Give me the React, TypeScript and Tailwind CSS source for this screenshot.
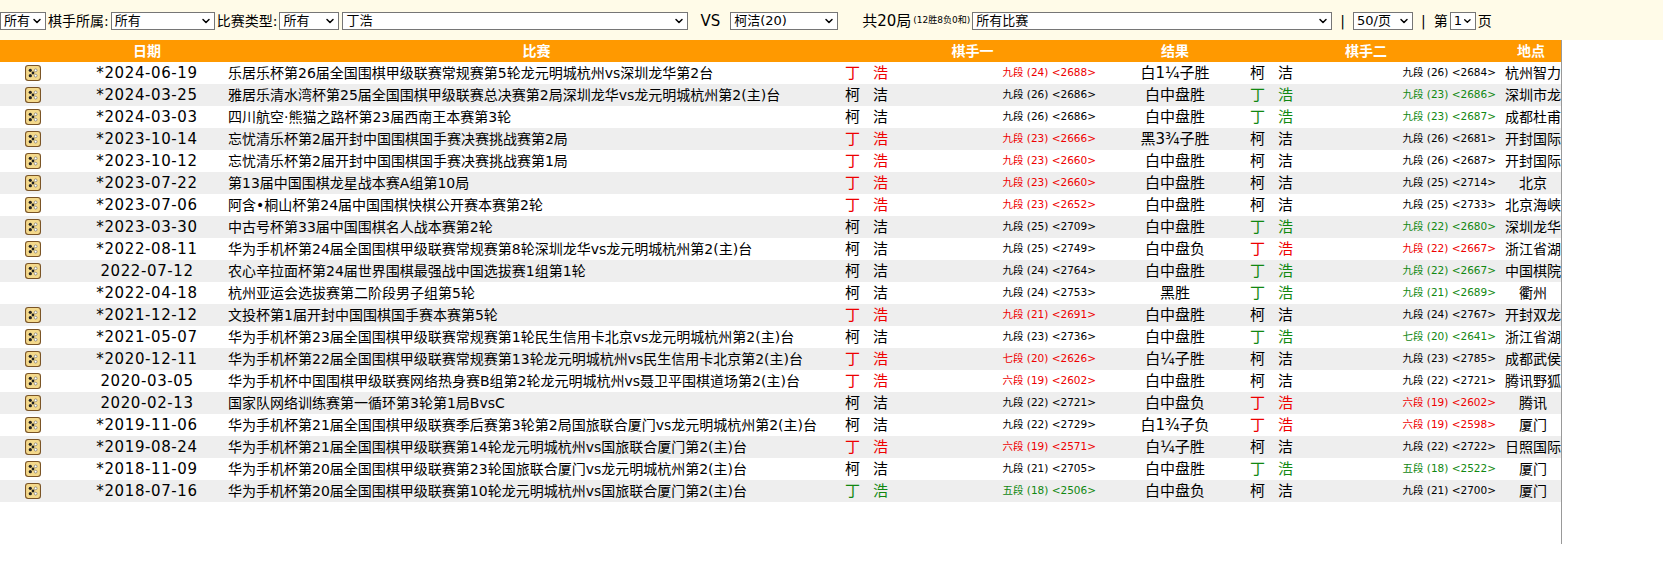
import { ChevronDown } from "lucide-react";

type Row = {
  date: string;
  match: string;
  dingFirst: boolean;
  dingWin: boolean;
  r1: string;
  result: string;
  r2: string;
  place: string;
  icon?: boolean;
};

const rows: Row[] = [
  { date: "*2024-06-19", match: "乐居乐杯第26届全国围棋甲级联赛常规赛第5轮龙元明城杭州vs深圳龙华第2台", dingFirst: true, dingWin: true, r1: "九段 (24) <2688>", result: "白1¼子胜", r2: "九段 (26) <2684>", place: "杭州智力" },
  { date: "*2024-03-25", match: "雅居乐清水湾杯第25届全国围棋甲级联赛总决赛第2局深圳龙华vs龙元明城杭州第2(主)台", dingFirst: false, dingWin: false, r1: "九段 (26) <2686>", result: "白中盘胜", r2: "九段 (23) <2686>", place: "深圳市龙" },
  { date: "*2024-03-03", match: "四川航空·熊猫之路杯第23届西南王本赛第3轮", dingFirst: false, dingWin: false, r1: "九段 (26) <2686>", result: "白中盘胜", r2: "九段 (23) <2687>", place: "成都杜甫" },
  { date: "*2023-10-14", match: "忘忧清乐杯第2届开封中国围棋国手赛决赛挑战赛第2局", dingFirst: true, dingWin: true, r1: "九段 (23) <2666>", result: "黑3¾子胜", r2: "九段 (26) <2681>", place: "开封国际" },
  { date: "*2023-10-12", match: "忘忧清乐杯第2届开封中国围棋国手赛决赛挑战赛第1局", dingFirst: true, dingWin: true, r1: "九段 (23) <2660>", result: "白中盘胜", r2: "九段 (26) <2687>", place: "开封国际" },
  { date: "*2023-07-22", match: "第13届中国围棋龙星战本赛A组第10局", dingFirst: true, dingWin: true, r1: "九段 (23) <2660>", result: "白中盘胜", r2: "九段 (25) <2714>", place: "北京" },
  { date: "*2023-07-06", match: "阿含•桐山杯第24届中国围棋快棋公开赛本赛第2轮", dingFirst: true, dingWin: true, r1: "九段 (23) <2652>", result: "白中盘胜", r2: "九段 (25) <2733>", place: "北京海峡" },
  { date: "*2023-03-30", match: "中古号杯第33届中国围棋名人战本赛第2轮", dingFirst: false, dingWin: false, r1: "九段 (25) <2709>", result: "白中盘胜", r2: "九段 (22) <2680>", place: "深圳龙华" },
  { date: "*2022-08-11", match: "华为手机杯第24届全国围棋甲级联赛常规赛第8轮深圳龙华vs龙元明城杭州第2(主)台", dingFirst: false, dingWin: true, r1: "九段 (25) <2749>", result: "白中盘负", r2: "九段 (22) <2667>", place: "浙江省湖" },
  { date: "2022-07-12", match: "农心辛拉面杯第24届世界围棋最强战中国选拔赛1组第1轮", dingFirst: false, dingWin: false, r1: "九段 (24) <2764>", result: "白中盘胜", r2: "九段 (22) <2667>", place: "中国棋院" },
  { date: "*2022-04-18", match: "杭州亚运会选拔赛第二阶段男子组第5轮", dingFirst: false, dingWin: false, r1: "九段 (24) <2753>", result: "黑胜", r2: "九段 (21) <2689>", place: "衢州", icon: false },
  { date: "*2021-12-12", match: "文投杯第1届开封中国围棋国手赛本赛第5轮", dingFirst: true, dingWin: true, r1: "九段 (21) <2691>", result: "白中盘胜", r2: "九段 (24) <2767>", place: "开封双龙" },
  { date: "*2021-05-07", match: "华为手机杯第23届全国围棋甲级联赛常规赛第1轮民生信用卡北京vs龙元明城杭州第2(主)台", dingFirst: false, dingWin: false, r1: "九段 (23) <2736>", result: "白中盘胜", r2: "七段 (20) <2641>", place: "浙江省湖" },
  { date: "*2020-12-11", match: "华为手机杯第22届全国围棋甲级联赛常规赛第13轮龙元明城杭州vs民生信用卡北京第2(主)台", dingFirst: true, dingWin: true, r1: "七段 (20) <2626>", result: "白¼子胜", r2: "九段 (23) <2785>", place: "成都武侯" },
  { date: "2020-03-05", match: "华为手机杯中国围棋甲级联赛网络热身赛B组第2轮龙元明城杭州vs聂卫平围棋道场第2(主)台", dingFirst: true, dingWin: true, r1: "六段 (19) <2602>", result: "白中盘胜", r2: "九段 (22) <2721>", place: "腾讯野狐" },
  { date: "2020-02-13", match: "国家队网络训练赛第一循环第3轮第1局BvsC", dingFirst: false, dingWin: true, r1: "九段 (22) <2721>", result: "白中盘负", r2: "六段 (19) <2602>", place: "腾讯" },
  { date: "*2019-11-06", match: "华为手机杯第21届全国围棋甲级联赛季后赛第3轮第2局国旅联合厦门vs龙元明城杭州第2(主)台", dingFirst: false, dingWin: true, r1: "九段 (22) <2729>", result: "白1¾子负", r2: "六段 (19) <2598>", place: "厦门" },
  { date: "*2019-08-24", match: "华为手机杯第21届全国围棋甲级联赛第14轮龙元明城杭州vs国旅联合厦门第2(主)台", dingFirst: true, dingWin: true, r1: "六段 (19) <2571>", result: "白¼子胜", r2: "九段 (22) <2722>", place: "日照国际" },
  { date: "*2018-11-09", match: "华为手机杯第20届全国围棋甲级联赛第23轮国旅联合厦门vs龙元明城杭州第2(主)台", dingFirst: false, dingWin: false, r1: "九段 (21) <2705>", result: "白中盘胜", r2: "五段 (18) <2522>", place: "厦门" },
  { date: "*2018-07-16", match: "华为手机杯第20届全国围棋甲级联赛第10轮龙元明城杭州vs国旅联合厦门第2(主)台", dingFirst: true, dingWin: false, r1: "五段 (18) <2506>", result: "白中盘负", r2: "九段 (21) <2700>", place: "厦门" },
];

const font = { fontFamily: '"DejaVu Sans", "Noto Sans CJK SC", sans-serif' };

function Select({ w, label }: { w: string; label: string }) {
  return (
    <span className={`inline-flex h-[18px] items-center justify-between border border-[#767676] bg-white pl-[3px] pr-[2px] text-[13px] text-black ${w}`}>
      <span>{label}</span>
      <ChevronDown size={12} strokeWidth={3} />
    </span>
  );
}

function BoardIcon() {
  return (
    <svg width="16" height="16" viewBox="0 0 15 15">
      <rect x="0.5" y="0.5" width="14" height="14" rx="2.5" fill="#f4d98c" stroke="#7a5426" />
      <circle cx="5" cy="5" r="1.5" fill="#222" />
      <circle cx="10" cy="5" r="1.3" fill="#fff" stroke="#555" strokeWidth="0.5" />
      <circle cx="7.5" cy="7.5" r="1.3" fill="#222" />
      <circle cx="5" cy="10" r="1.5" fill="#222" />
      <circle cx="10" cy="10" r="1.3" fill="#fff" stroke="#555" strokeWidth="0.5" />
    </svg>
  );
}

function Player({ ding, win, rank }: { ding: boolean; win: boolean; rank: string }) {
  const color = ding ? (win ? "text-[#ee0000]" : "text-[#118811]") : "text-black";
  return (
    <div className={`flex items-center ${color}`}>
      <span className="w-[28px] text-[15px]">{ding ? "丁" : "柯"}</span>
      <span className="text-[15px]">{ding ? "浩" : "洁"}</span>
      <span className="ml-auto pr-[4px] text-[10.5px]">{rank}</span>
    </div>
  );
}

export default function App() {
  return (
    <div className="h-[562px] w-[1663px] bg-white text-black" style={font}>
      <div className="flex h-[40px] items-center gap-[2px] bg-[#fffbe8] pt-[2px] text-[14px] whitespace-nowrap">
        <Select w="w-[46px]" label="所有" />
        <span>棋手所属:</span>
        <Select w="w-[104px]" label="所有" />
        <span>比赛类型:</span>
        <Select w="w-[60px]" label="所有" />
        <Select w="w-[346px] ml-[1px]" label="丁浩" />
        <span className="ml-[10px] mr-[8px] text-[15px]">VS</span>
        <Select w="w-[108px]" label="柯洁(20)" />
        <span className="ml-[22px] text-[15px]">共20局</span>
        <span className="text-[9px]">(12胜8负0和)</span>
        <Select w="w-[360px]" label="所有比赛" />
        <span className="mx-[6px]">|</span>
        <Select w="w-[60px]" label="50/页" />
        <span className="mx-[6px]">|</span>
        <span>第</span>
        <Select w="w-[26px]" label="1" />
        <span>页</span>
      </div>
      <div className="w-[1562px] border-r border-[#999]">
        <div className="grid h-[22px] grid-cols-[66px_162px_617px_255px_150px_250px_62px] items-center bg-[#ff9900] text-[14px] font-bold text-white">
          <span />
          <span className="text-center">日期</span>
          <span className="text-center">比赛</span>
          <span className="text-center">棋手一</span>
          <span className="text-center">结果</span>
          <span className="pl-[95px]">棋手二</span>
          <span className="text-center">地点</span>
        </div>
        {rows.map((r, i) => (
          <div
            key={i}
            className={`grid h-[22px] grid-cols-[66px_162px_617px_255px_150px_250px_62px] items-center text-[14px] ${i % 2 ? "bg-[#eeeeee]" : "bg-white"}`}
          >
            <span className="flex justify-center">{r.icon !== false && <BoardIcon />}</span>
            <span className="text-center text-[15px] tracking-[0.6px]">{r.date}</span>
            <span className="truncate text-[14px]">{r.match}</span>
            <Player ding={r.dingFirst} win={r.dingWin} rank={r.r1} />
            <span className="text-center text-[15px]">{r.result}</span>
            <Player ding={!r.dingFirst} win={r.dingWin} rank={r.r2} />
            <span className="overflow-hidden pl-[4px] text-center text-[14px] whitespace-nowrap">{r.place}</span>
          </div>
        ))}
        <div className="h-[42px]" />
      </div>
    </div>
  );
}
